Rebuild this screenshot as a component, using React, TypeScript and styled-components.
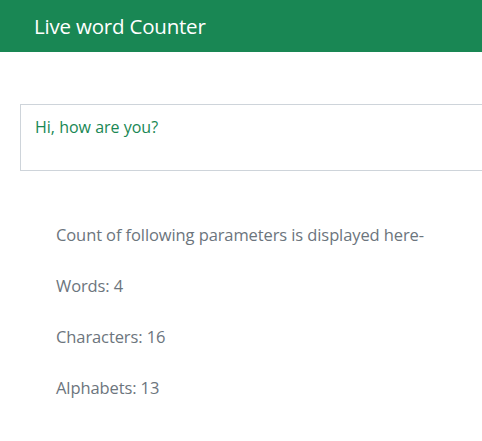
import React, { useState } from "react";
import styled, { createGlobalStyle } from "styled-components";

const Global = createGlobalStyle`
  html, body { margin: 0; padding: 0; background: #fff; overflow: hidden; }
  body { font-family: "Open Sans", "Noto Sans", sans-serif; }
`;

const Header = styled.header`
  height: 52px;
  background: #198754;
  display: flex;
  align-items: center;
  padding-left: 34px;
`;

const Title = styled.h1`
  margin: 0;
  color: #fff;
  font-size: 20.5px;
  font-weight: 400;
  letter-spacing: -0.2px;
`;

const Main = styled.main`
  padding: 52px 0 0 20px;
`;

const Input = styled.textarea`
  display: block;
  box-sizing: border-box;
  width: calc(100% + 40px);
  height: 67px;
  border: 1px solid #ced4da;
  padding: 9px 14px;
  font-family: "Open Sans", "Noto Sans", sans-serif;
  font-size: 16px;
  line-height: 26px;
  color: #198754;
  resize: none;
  outline: none;
`;

const Stats = styled.section`
  display: flex;
  flex-direction: column;
  gap: 27px;
  padding: 52px 0 0 36px;
`;

const Line = styled.p`
  margin: 0;
  color: #6c757d;
  font-size: 16.5px;
  line-height: 24px;
  letter-spacing: -0.1px;
`;

export default function App() {
  const [text, setText] = useState("Hi, how are you?");
  const words = text.trim() ? text.trim().split(/\s+/).length : 0;
  const alphabets = text.replace(/\s/g, "").length;
  return (
    <>
      <Global />
      <Header>
        <Title>Live word Counter</Title>
      </Header>
      <Main>
        <Input value={text} onChange={(e) => setText(e.target.value)} />
        <Stats>
          <Line>Count of following parameters is displayed here-</Line>
          <Line>Words: {words}</Line>
          <Line>Characters: {text.length}</Line>
          <Line>Alphabets: {alphabets}</Line>
        </Stats>
      </Main>
    </>
  );
}
